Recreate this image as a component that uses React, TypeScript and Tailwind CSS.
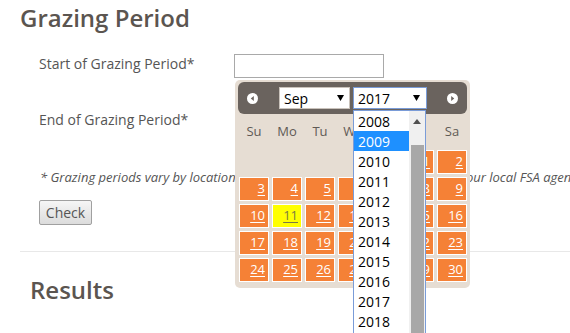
import React from "react";

const years = ["2008", "2009", "2010", "2011", "2012", "2013", "2014", "2015", "2016", "2017", "2018", "2019"];

// Sep 2017 starts on a Friday
const days: (number | null)[] = [null, null, null, null, null, 1, 2, ...Array.from({ length: 28 }, (_, i) => i + 3)];

const Caret = () => (
  <svg width="7" height="6" viewBox="0 0 7 6" className="shrink-0">
    <path d="M0 0h7L3.5 6z" fill="#000" />
  </svg>
);

const NavIcon = ({ dir }: { dir: "prev" | "next" }) => (
  <svg width="11" height="11" viewBox="0 0 11 11">
    <circle cx="5.5" cy="5.5" r="5.5" fill="#fff" />
    {dir === "prev" ? <path d="M6.8 3v5L3.8 5.5z" fill="#6a635e" /> : <path d="M4.2 3v5l3-2.5z" fill="#6a635e" />}
  </svg>
);

const DatePicker = () => (
  <div className="absolute left-[235px] top-[80px] w-[235px] h-[208px] bg-[#e6ddd3] rounded-[5px] pt-[2px] px-[3px]">
    {/* header */}
    <div className="h-[32px] bg-[#6a635e] rounded-[6px] flex items-center pl-[9px] pr-[9px]">
      <NavIcon dir="prev" />
      <div className="ml-[21px] w-[71px] h-[22px] bg-white border border-[#c9c2bb] flex items-center justify-between pl-[4px] pr-[5px] text-[14px] text-black">
        <span>Sep</span>
        <Caret />
      </div>
      <div className="ml-[3px] w-[74px] h-[22px] bg-white border border-[#7a9cd8] flex items-center justify-between pl-[4px] pr-[6px] text-[14px] text-black">
        <span>2017</span>
        <Caret />
      </div>
      <div className="ml-auto">
        <NavIcon dir="next" />
      </div>
    </div>
    {/* weekday names */}
    <div className="grid grid-cols-7 gap-x-[3px] ml-[1px] h-[36px] items-center text-[13px] text-[#5f5a55]">
      {["Su", "Mo", "Tu", "We", "Th", "Fr", "Sa"].map((d) => (
        <div key={d} className="text-center">
          {d}
        </div>
      ))}
    </div>
    {/* day cells */}
    <div className="grid grid-cols-7 gap-[3px] ml-[1px] w-[228px]">
      {days.map((d, i) =>
        d === null ? (
          <div key={i} className="h-[24px]" />
        ) : (
          <div
            key={i}
            className={`h-[24px] border border-white flex items-center justify-end pr-[3px] text-[13px] underline underline-offset-2 ${
              d === 11 ? "bg-[#ffff00] text-[#7a7a44]" : "bg-[#f58136] text-white"
            }`}
          >
            {d}
          </div>
        )
      )}
    </div>
  </div>
);

const YearList = () => (
  <div className="absolute left-[353px] top-[110px] w-[73px] h-[240px] bg-white border border-[#7a9cd8] flex">
    <div className="flex-1 flex flex-col">
      {years.map((y) => (
        <div
          key={y}
          className={`h-[20px] flex items-center pl-[4px] text-[14px] ${
            y === "2009" ? "bg-[#1e90ff] text-white" : "text-black"
          }`}
        >
          {y}
        </div>
      ))}
    </div>
    <div className="w-[16px] bg-[#f0f0f0] flex flex-col items-center">
      <div className="h-[20px] flex items-center justify-center">
        <svg width="8" height="5" viewBox="0 0 8 5">
          <path d="M0 5L4 0l4 5z" fill="#505050" />
        </svg>
      </div>
      <div className="mt-[14px] w-[13px] flex-1 bg-[#a8a8a8]" />
    </div>
  </div>
);

export default function App() {
  return (
    <div className="relative w-[570px] h-[333px] overflow-hidden bg-white font-['Open_Sans',sans-serif] text-[#555]">
      <h2 className="pl-[20px] pt-[3px] text-[24px] leading-[30px] font-semibold text-[#5b5550]">Grazing Period</h2>

      <div className="mt-[21px] flex items-start">
        <label className="pl-[39px] w-[234px] text-[14px] leading-[20px]">Start of Grazing Period*</label>
        <div className="w-[150px] h-[24px] border border-[#a9a9a9] bg-white" />
      </div>

      <div className="mt-[32px] flex items-start">
        <label className="pl-[39px] w-[234px] text-[14px] leading-[20px]">End of Grazing Period*</label>
        <div className="ml-[3px] w-[150px] h-[24px] border border-[#a9a9a9] bg-white" />
      </div>

      <p className="mt-[33px] pl-[40px] text-[13px] leading-[20px] italic whitespace-nowrap">
        * Grazing periods vary by location. Please confirm the grazing dates with your local FSA agency.
      </p>

      <div className="mt-[13px] pl-[39px]">
        <button className="w-[53px] h-[25px] border border-[#a0a0a0] rounded-[2px] bg-gradient-to-b from-[#f6f6f6] to-[#dcdcdc] text-[14px] text-[#555]">
          Check
        </button>
      </div>

      <div className="mt-[26px] ml-[20px] border-t border-[#e8e8e8]" />

      <h2 className="pl-[30px] pt-[23px] text-[24px] leading-[30px] font-semibold text-[#5b5550]">Results</h2>

      <DatePicker />
      <YearList />
    </div>
  );
}
